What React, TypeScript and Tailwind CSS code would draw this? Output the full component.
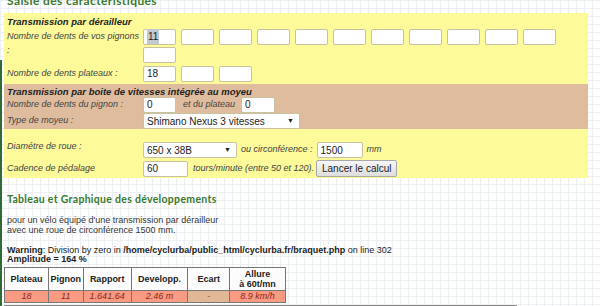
import React from "react";

const Box = ({ w, value, sel }: { w: string; value?: string; sel?: boolean }) => (
  <div
    className={`${w} h-[16px] shrink-0 border border-[#c9c2a0] bg-white rounded-[2px] flex items-center px-[3px] text-[10px] text-[#222] not-italic`}
  >
    {value && <span className={sel ? "bg-[#c3c9d1] px-[1px]" : ""}>{value}</span>}
  </div>
);

const Select = ({ w, value }: { w: string; value: string }) => (
  <div
    className={`${w} h-[16px] shrink-0 border border-[#c9c2a0] bg-white rounded-[2px] flex items-center justify-between pl-[3px] pr-[5px] text-[10px] text-[#222] not-italic`}
  >
    <span>{value}</span>
    <span className="text-[7px]">▼</span>
  </div>
);

const Label = ({ children }: { children: React.ReactNode }) => (
  <div className="w-[136px] shrink-0 italic text-[9px] text-[#444]">{children}</div>
);

export default function App() {
  const pignons = ["11", "", "", "", "", "", "", "", "", "", ""];
  const heads = [
    { t: "Plateau", w: "w-[44px]" },
    { t: "Pignon", w: "w-[35px]" },
    { t: "Rapport", w: "w-[48px]" },
    { t: "Developp.", w: "w-[57px]" },
    { t: "Ecart", w: "w-[42px]" },
    { t: "Allure", w: "w-[55px]" },
  ];
  const row = ["18", "11", "1.641.64", "2.46 m", "-", "8.9 km/h"];

  return (
    <div className="relative w-[600px] h-[306px] overflow-hidden bg-white bg-[linear-gradient(#edf0f3_1px,transparent_1px),linear-gradient(90deg,#edf0f3_1px,transparent_1px)] bg-[size:8px_8px] font-['Liberation_Sans',Arial,sans-serif]">
      <div className="absolute left-0 top-[60px] bottom-0 w-[2px] bg-[#2f6b35]" />

      {/* titre coupé en haut */}
      <div className="mt-[-8px] h-[21px] pl-[7px] font-['Lato',sans-serif] font-bold text-[12px] text-[#3a7a30] tracking-[0.4px]">
        Saisie des caractéristiques
      </div>

      <div className="ml-[4px] w-[584px]">
        {/* Transmission par dérailleur */}
        <div className="bg-[#fdfa9a] h-[71px] pl-[3px] pt-[2px]">
          <div className="font-bold italic text-[9.5px] text-[#222] h-[12px]">Transmission par dérailleur</div>
          <div className="flex items-center h-[17px] mt-[1px]">
            <Label>Nombre de dents de vos pignons</Label>
            <div className="flex gap-[5px]">
              {pignons.map((p, i) => (
                <Box key={i} w="w-[33px]" value={p} sel={i === 0} />
              ))}
            </div>
          </div>
          <div className="flex items-center h-[17px] mt-[1px]">
            <Label>
              <span className="relative top-[-4px]">:</span>
            </Label>
            <Box w="w-[33px]" />
          </div>
          <div className="flex items-center h-[17px] mt-[2px]">
            <Label>Nombre de dents plateaux :</Label>
            <div className="flex gap-[5px]">
              <Box w="w-[33px]" value="18" />
              <Box w="w-[33px]" />
              <Box w="w-[33px]" />
            </div>
          </div>
        </div>

        {/* Moyeu */}
        <div className="bg-[#dfbc9d] h-[45px] pl-[3px] pt-[1px]">
          <div className="font-bold italic text-[9.5px] text-[#222] h-[12px]">
            Transmission par boite de vitesses intégrée au moyeu
          </div>
          <div className="flex items-center h-[15px]">
            <Label>Nombre de dents du pignon :</Label>
            <Box w="w-[33px]" value="0" />
            <span className="italic text-[9px] text-[#444] ml-[7px] mr-[6px]">et du plateau</span>
            <Box w="w-[34px]" value="0" />
          </div>
          <div className="flex items-center h-[16px] mt-[1px]">
            <Label>Type de moyeu :</Label>
            <Select w="w-[157px]" value="Shimano Nexus 3 vitesses" />
          </div>
        </div>

        {/* Roue et cadence */}
        <div className="bg-[#fdfa9a] h-[49px] pl-[3px] pt-[13px]">
          <div className="flex items-center h-[16px]">
            <Label>
              <span className="relative top-[-3px]">Diamétre de roue :</span>
            </Label>
            <Select w="w-[94px]" value="650 x 38B" />
            <span className="italic text-[9px] text-[#444] ml-[4px] mr-[4px] whitespace-nowrap">ou circonférence :</span>
            <Box w="w-[46px]" value="1500" />
            <span className="italic text-[9px] text-[#444] ml-[4px]">mm</span>
          </div>
          <div className="flex items-center h-[17px] mt-[2px]">
            <Label>Cadence de pédalage</Label>
            <Box w="w-[45px]" value="60" />
            <span className="italic text-[9px] text-[#444] ml-[5px] w-[123px] shrink-0 whitespace-nowrap">
              tours/minute (entre 50 et 120).
            </span>
            <div className="h-[17px] px-[5px] border border-[#a8a8a8] rounded-[2px] bg-[linear-gradient(#f6f6f6,#dedede)] flex items-center text-[10px] text-[#222] whitespace-nowrap">
              Lancer le calcul
            </div>
          </div>
        </div>
      </div>

      <div className="mt-[14px] pl-[7px] h-[14px] font-['Lato',sans-serif] font-bold text-[10.5px] text-[#3a7a30] tracking-[0.3px]">
        Tableau et Graphique des développements
      </div>

      <div className="mt-[9px] pl-[7px] text-[9px] leading-[10px] text-[#333]">
        <div>pour un vélo équipé d'une transmission par dérailleur</div>
        <div>avec une roue de circonférence 1500 mm.</div>
      </div>

      <div className="mt-[11px] pl-[7px] text-[9px] leading-[9px] text-[#222]">
        <div>
          <b>Warning</b>: Division by zero in <b>/home/cyclurba/public_html/cyclurba.fr/braquet.php</b> on line 302
        </div>
        <div className="font-bold">Amplitude = 164 %</div>
      </div>

      <div className="ml-[4px] mt-[3px] w-[282px] border border-[#777]">
        <div className="flex h-[22px] bg-[#fcfcfc]">
          {heads.map((h, i) => (
            <div
              key={h.t}
              className={`${h.w} ${i < 5 ? "border-r border-[#777]" : ""} flex flex-col items-center justify-center font-bold text-[9px] leading-[10px] text-[#222]`}
            >
              <span>{h.t}</span>
              {h.t === "Allure" && <span>à 60t/mn</span>}
            </div>
          ))}
        </div>
        <div className="flex h-[12px] border-t border-[#777]">
          {row.map((v, i) => (
            <div
              key={i}
              className={`${heads[i].w} ${i < 5 ? "border-r border-[#777]" : ""} ${
                i === 4 ? "bg-[#e0b898]" : "bg-[#f99a82]"
              } flex items-center justify-center italic text-[9px] text-[#8a2a20]`}
            >
              {v}
            </div>
          ))}
        </div>
      </div>

      <div className="ml-[4px] mt-[2px] w-[513px] h-[4px] border-t-2 border-x border-[#888]" />
    </div>
  );
}
